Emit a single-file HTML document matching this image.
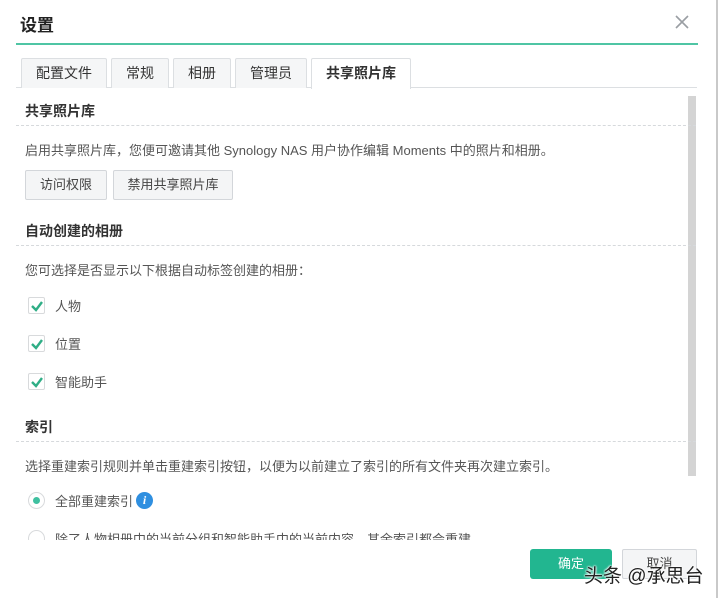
<!DOCTYPE html>
<html><head><meta charset="utf-8"><style>
*{margin:0;padding:0;box-sizing:border-box}
body{width:718px;height:598px;overflow:hidden;background:#fff;font-family:"Liberation Sans","Noto Sans CJK SC",sans-serif;color:#414b55;position:relative}
.a{position:absolute;white-space:nowrap}
.t{font-size:13px;color:#555}
.h{font-size:14px;font-weight:bold;color:#333}
.dash{position:absolute;left:16px;width:680px;border-top:1px dashed #d6d9dc;height:0}
.tab{position:absolute;top:58px;height:30px;border:1px solid #dcdfe2;border-bottom:none;background:#f5f6f7;font-size:14px;color:#333;text-align:center;line-height:28px;border-radius:2px 2px 0 0}
.btn{position:absolute;height:30px;border:1px solid #d3d6da;background:#f4f5f6;border-radius:2px;font-size:13px;color:#444;text-align:center;line-height:28px}
.cb{position:absolute;left:28px;width:17px;height:17px;border:1px solid #d8dadc;border-radius:2px;background:#fff}
</style></head><body>
<div class="a" style="left:20px;top:11px;font-size:17px;font-weight:bold;color:#222">设置</div>
<svg class="a" style="left:674px;top:14px" width="16" height="16"><path d="M2 2L14 14M14 2L2 14" stroke="#9a9ea3" stroke-width="1.6"/></svg>
<div class="a" style="left:16px;top:43px;width:682px;height:2px;background:#4fc5a4"></div>
<div class="a" style="left:716px;top:0;width:2px;height:598px;background:#c9c9c9"></div>
<div class="a" style="left:16px;top:87px;width:681px;height:1px;background:#dcdfe2"></div>
<div class="tab" style="left:21px;width:86px">配置文件</div>
<div class="tab" style="left:111px;width:58px">常规</div>
<div class="tab" style="left:173px;width:58px">相册</div>
<div class="tab" style="left:235px;width:72px">管理员</div>
<div class="tab" style="left:311px;width:100px;background:#fff;height:31px;font-weight:bold">共享照片库</div>
<div class="a" style="left:688px;top:96px;width:8px;height:380px;background:#d4d4d4"></div>
<div class="a h" style="left:25px;top:101px">共享照片库</div>
<div class="dash" style="top:125px"></div>
<div class="a t" style="left:25px;top:140px">启用共享照片库，您便可邀请其他 Synology NAS 用户协作编辑 Moments 中的照片和相册。</div>
<div class="btn" style="left:25px;top:170px;width:82px">访问权限</div>
<div class="btn" style="left:113px;top:170px;width:120px">禁用共享照片库</div>
<div class="a h" style="left:25px;top:221px">自动创建的相册</div>
<div class="dash" style="top:245px"></div>
<div class="a t" style="left:25px;top:260px">您可选择是否显示以下根据自动标签创建的相册：</div>
<div class="cb" style="top:297px"></div><svg class="a" style="left:29px;top:298px" width="16" height="16"><path d="M3 8L7 12L13 4" stroke="#2fae86" stroke-width="2.4" fill="none"/></svg><div class="a t" style="left:55px;top:296px">人物</div>
<div class="cb" style="top:335px"></div><svg class="a" style="left:29px;top:336px" width="16" height="16"><path d="M3 8L7 12L13 4" stroke="#2fae86" stroke-width="2.4" fill="none"/></svg><div class="a t" style="left:55px;top:334px">位置</div>
<div class="cb" style="top:373px"></div><svg class="a" style="left:29px;top:374px" width="16" height="16"><path d="M3 8L7 12L13 4" stroke="#2fae86" stroke-width="2.4" fill="none"/></svg><div class="a t" style="left:55px;top:372px">智能助手</div>
<div class="a h" style="left:25px;top:417px">索引</div>
<div class="dash" style="top:441px"></div>
<div class="a t" style="left:25px;top:456px">选择重建索引规则并单击重建索引按钮，以便为以前建立了索引的所有文件夹再次建立索引。</div>
<div class="a" style="left:28px;top:492px;width:17px;height:17px;border:1px solid #d8dadc;border-radius:50%"></div>
<div class="a" style="left:33px;top:497px;width:7px;height:7px;border-radius:50%;background:#3fc0a0"></div>
<div class="a t" style="left:55px;top:491px">全部重建索引</div>
<div class="a" style="left:136px;top:492px;width:17px;height:17px;border-radius:50%;background:#2f8fe0;color:#fff;font:italic bold 12px 'Liberation Serif',serif;text-align:center;line-height:17px">i</div>
<div class="a" style="left:0;top:528px;width:690px;height:12px;overflow:hidden">
<div class="a" style="left:28px;top:2px;width:17px;height:17px;border:1px solid #d8dadc;border-radius:50%"></div>
<div class="a t" style="left:55px;top:1px">除了人物相册中的当前分组和智能助手中的当前内容，其余索引都会重建</div></div>
<div class="a" style="left:530px;top:549px;width:82px;height:30px;background:#22b690;border-radius:3px;color:#fff;font-size:13px;text-align:center;line-height:30px">确定</div>
<div class="btn" style="left:622px;top:549px;width:75px">取消</div>
<div class="a" style="left:584px;top:561px;font-size:19px;color:#222;text-shadow:0 0 2px #fff,0 0 2px #fff,0 0 2px #fff">头条 @承思台</div>
</body></html>
